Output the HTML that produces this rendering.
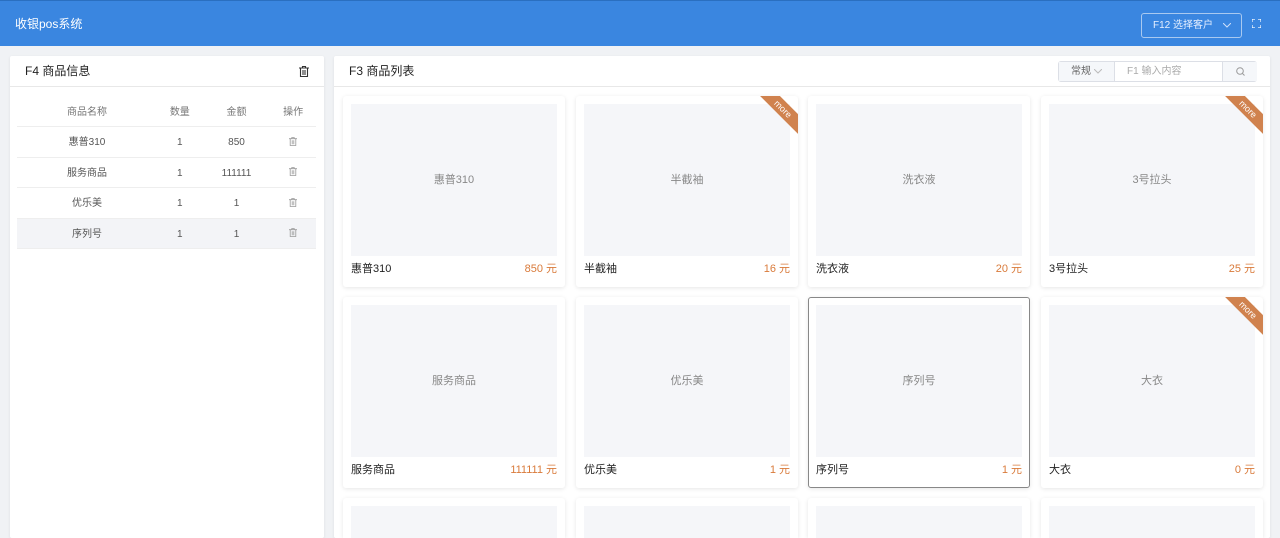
<!DOCTYPE html>
<html><head><meta charset="utf-8"><style>
*{box-sizing:border-box;margin:0;padding:0}
html,body{width:1280px;height:538px;overflow:hidden}
body{background:#f0f2f5;font-family:"Liberation Sans","Noto Sans CJK SC",sans-serif;font-size:12px;color:#333;position:relative}
.hdr{position:absolute;left:0;top:0;width:1280px;height:46px;background:#3a86e0;border-top:1px solid #2a6fc0}
.hdr .t{position:absolute;left:15px;top:15px;color:#fff;font-size:12px;line-height:16px}
.sel{position:absolute;left:1141px;top:12px;width:101px;height:25px;border:1px solid #a9c9f0;border-radius:3px;color:#e6efff;font-size:10px;line-height:23px;padding-left:11px}
.fs{position:absolute;left:1252px;top:18px;width:9px;height:9px}
.panel{position:absolute;background:#fff;box-shadow:0 1px 3px rgba(0,0,0,.08);border-radius:2px}
.ph{height:31px;border-bottom:1px solid #e8e8e8;font-size:12px;line-height:31px;padding-left:15px;color:#222}
table{border-collapse:collapse;position:absolute;left:7px;top:40px;width:299px}
td,th{text-align:center;font-weight:normal;height:30.5px;font-size:10px;color:#555;border-bottom:1px solid #eee;line-height:12px;padding-top:3px}
th{color:#777}
.card{position:absolute;width:222px;height:191px;background:#fff;border-radius:3px;box-shadow:0 1px 4px rgba(0,0,0,.1);overflow:hidden}
.card.sel2{border:1px solid #888}
.img{position:absolute;left:8px;top:8px;width:206px;height:152px;background:#f5f6f9;color:#888;font-size:11px;text-align:center;line-height:152px}
.nm{position:absolute;left:8px;top:166px;font-size:11px;line-height:14px;color:#222}
.pr{position:absolute;right:8px;top:166px;font-size:11px;line-height:14px;color:#d97a3a}
.rib{position:absolute;right:-18px;top:6px;width:66px;height:14px;background:#d0824e;color:#fff;font-size:9px;text-align:center;line-height:14px;transform:rotate(45deg)}
.srch{position:absolute;left:1058px;top:61px;width:199px;height:21px;border:1px solid #dcdfe6;border-radius:3px;font-size:10px;color:#aaa;background:#fff}
.last{height:40px;border-radius:3px 3px 0 0}
</style></head><body>
<div class="hdr"><div class="t">收银pos系统</div>
<div class="sel">F12 选择客户<svg style="position:absolute;right:10px;top:9px" width="8" height="5" viewBox="0 0 8 5" fill="none" stroke="#cfe0fa"><path d="M0 0l4 4 4-4"/></svg></div>
<svg class="fs" viewBox="0 0 9 9" fill="none" stroke="#fff" stroke-width="1.2"><path d="M0 3V0h3M6 0h3v3M9 6v3H6M3 9H0V6"/></svg></div>

<div class="panel" style="left:10px;top:56px;width:314px;height:482px">
<div class="ph">F4 商品信息</div>
<svg style="position:absolute;left:289px;top:10px" width="10" height="11" viewBox="0 0 10 11" fill="none" stroke="#333" stroke-width="1.1"><path d="M0 2h10M3.5 2V.5h3V2M1.5 2v8.5h7V2M4 4v5M6 4v5"/></svg>
<table>
<tr><th style="width:140px">商品名称</th><th>数量</th><th>金额</th><th>操作</th></tr>
<tr><td>惠普310</td><td>1</td><td>850</td><td><svg width="8" height="9" viewBox="0 0 10 11" fill="none" stroke="#999"><path d="M0 2h10M3.5 2V.5h3V2M1.5 2v8.5h7V2M4 4v5M6 4v5"/></svg></td></tr>
<tr><td>服务商品</td><td>1</td><td>111111</td><td><svg width="8" height="9" viewBox="0 0 10 11" fill="none" stroke="#999"><path d="M0 2h10M3.5 2V.5h3V2M1.5 2v8.5h7V2M4 4v5M6 4v5"/></svg></td></tr>
<tr><td>优乐美</td><td>1</td><td>1</td><td><svg width="8" height="9" viewBox="0 0 10 11" fill="none" stroke="#999"><path d="M0 2h10M3.5 2V.5h3V2M1.5 2v8.5h7V2M4 4v5M6 4v5"/></svg></td></tr>
<tr style="background:#f3f4f7"><td>序列号</td><td>1</td><td>1</td><td><svg width="8" height="9" viewBox="0 0 10 11" fill="none" stroke="#999"><path d="M0 2h10M3.5 2V.5h3V2M1.5 2v8.5h7V2M4 4v5M6 4v5"/></svg></td></tr>
</table></div>

<div class="panel" style="left:334px;top:56px;width:936px;height:482px;background:#fff">
<div class="ph">F3 商品列表</div></div>
<div class="srch"><div style="position:absolute;left:0;top:0;width:56px;height:19px;background:#f5f7fa;border-right:1px solid #dcdfe6;line-height:19px;padding-left:12px;color:#666">常规 <svg width="8" height="5" viewBox="0 0 8 5" fill="none" stroke="#bbb"><path d="M0 0l4 4 4-4"/></svg></div>
<div style="position:absolute;left:68px;top:0;line-height:19px">F1 输入内容</div>
<div style="position:absolute;left:163px;top:0;width:35px;height:19px;background:#f5f7fa;border-left:1px solid #dcdfe6"><svg style="position:absolute;left:13px;top:5px" width="9" height="9" viewBox="0 0 9 9" fill="none" stroke="#999"><circle cx="4" cy="4" r="3.3"/><path d="M6.5 6.5L8.5 8.5"/></svg></div></div>

<div class="card" style="left:343px;top:96px"><div class="img">惠普310</div><div class="nm">惠普310</div><div class="pr">850 元</div></div>
<div class="card" style="left:576px;top:96px"><div class="img">半截袖</div><div class="nm">半截袖</div><div class="pr">16 元</div><div class="rib">more</div></div>
<div class="card" style="left:808px;top:96px"><div class="img">洗衣液</div><div class="nm">洗衣液</div><div class="pr">20 元</div></div>
<div class="card" style="left:1041px;top:96px"><div class="img">3号拉头</div><div class="nm">3号拉头</div><div class="pr">25 元</div><div class="rib">more</div></div>
<div class="card" style="left:343px;top:297px"><div class="img">服务商品</div><div class="nm">服务商品</div><div class="pr">111111 元</div></div>
<div class="card" style="left:576px;top:297px"><div class="img">优乐美</div><div class="nm">优乐美</div><div class="pr">1 元</div></div>
<div class="card sel2" style="left:808px;top:297px"><div class="img" style="left:7px;top:7px">序列号</div><div class="nm" style="left:7px;top:165px">序列号</div><div class="pr" style="right:7px;top:165px">1 元</div></div>
<div class="card" style="left:1041px;top:297px"><div class="img">大衣</div><div class="nm">大衣</div><div class="pr">0 元</div><div class="rib">more</div></div>
<div class="card last" style="left:343px;top:498px"><div class="img"></div></div>
<div class="card last" style="left:576px;top:498px"><div class="img"></div></div>
<div class="card last" style="left:808px;top:498px"><div class="img"></div></div>
<div class="card last" style="left:1041px;top:498px"><div class="img"></div></div>
</body></html>
